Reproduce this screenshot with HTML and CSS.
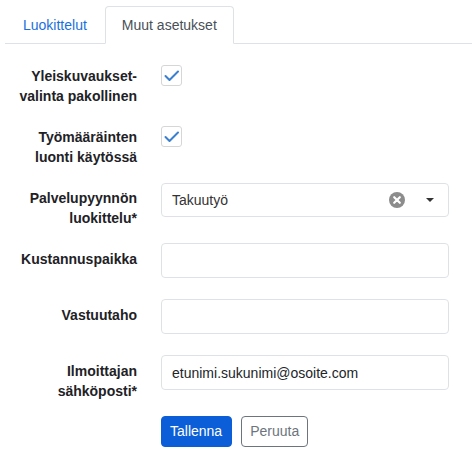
FILE: index.html
```html
<!DOCTYPE html>
<html lang="fi">
  <head>
    <meta charset="UTF-8" />
    <meta name="viewport" content="width=device-width, initial-scale=1.0" />
    <title>Muut asetukset</title>
    <link rel="stylesheet" href="styles.css">
  </head>
  <body>
    <div class="page">
      <ul class="tabs">
        <li><a href="#" class="tab">Luokittelut</a></li>
        <li><a href="#" class="tab active">Muut asetukset</a></li>
      </ul>

      <form class="settings">
        <div class="field">
          <label class="field-label">Yleiskuvaukset-<br />valinta pakollinen</label>
          <div class="field-control">
            <span class="check">
              <svg width="21" height="21" viewBox="0 0 21 21">
                <path d="M4.5 11 L8.5 15 L17 6.5" fill="none" stroke="#3a80cf" stroke-width="2" stroke-linecap="round" stroke-linejoin="round" />
              </svg>
            </span>
          </div>
        </div>

        <div class="field">
          <label class="field-label">Työmääräinten<br />luonti käytössä</label>
          <div class="field-control">
            <span class="check">
              <svg width="21" height="21" viewBox="0 0 21 21">
                <path d="M4.5 11 L8.5 15 L17 6.5" fill="none" stroke="#3a80cf" stroke-width="2" stroke-linecap="round" stroke-linejoin="round" />
              </svg>
            </span>
          </div>
        </div>

        <div class="field">
          <label class="field-label">Palvelupyynnön<br />luokittelu*</label>
          <div class="field-control">
            <div class="select">
              <span class="select-value">Takuutyö</span>
              <span class="select-clear">
                <svg width="16" height="16" viewBox="0 0 16 16">
                  <circle cx="8" cy="8" r="8" fill="#8c8c8c" />
                  <path d="M5.2 5.2 L10.8 10.8 M10.8 5.2 L5.2 10.8" stroke="#fff" stroke-width="2.2" stroke-linecap="round" />
                </svg>
              </span>
              <span class="select-caret"></span>
            </div>
          </div>
        </div>

        <div class="field">
          <label class="field-label">Kustannuspaikka</label>
          <div class="field-control">
            <input type="text" class="input" />
          </div>
        </div>

        <div class="field">
          <label class="field-label">Vastuutaho</label>
          <div class="field-control">
            <input type="text" class="input" />
          </div>
        </div>

        <div class="field">
          <label class="field-label">Ilmoittajan<br />sähköposti*</label>
          <div class="field-control">
            <input type="text" class="input" value="etunimi.sukunimi@osoite.com" />
          </div>
        </div>

        <div class="field">
          <div class="field-label"></div>
          <div class="field-control buttons">
            <button type="submit" class="btn btn-primary">Tallenna</button>
            <button type="button" class="btn btn-outline">Peruuta</button>
          </div>
        </div>
      </form>
    </div>
  </body>
</html>
```

FILE: styles.css
```css
:root {
  --primary-color: #0b5ed7;
  --link-color: #1a6fdc;
  --text-color: #212529;
  --border-color: #dee2e6;
  --muted-color: #6c757d;
}

* {
  box-sizing: border-box;
  margin: 0;
  padding: 0;
}

body {
  font-family: "Liberation Sans", Arial, sans-serif;
  font-size: 14px;
  line-height: 20px;
  color: var(--text-color);
  background-color: #fff;
}

.page {
  padding: 6px 0 0 5px;
}

.tabs {
  list-style: none;
  display: flex;
  border-bottom: 1px solid var(--border-color);
}

.tab {
  display: block;
  padding: 8px 17px 7px;
  line-height: 21px;
  border: 1px solid transparent;
  border-radius: 4px 4px 0 0;
  margin-bottom: -1px;
  color: var(--link-color);
  text-decoration: none;
}

.tab.active {
  padding: 8px 16px 7px;
  color: #495057;
  background-color: #fff;
  border-color: var(--border-color) var(--border-color) #fff;
}

.settings {
  margin-top: 16px;
  padding-right: 23px;
}

.field {
  display: flex;
  gap: 24px;
  min-height: 41px;
  margin-bottom: 15px;
}

.field-label {
  width: 132px;
  flex-shrink: 0;
  padding-top: 6px;
  text-align: right;
  font-weight: bold;
  color: #1e2226;
}

.field-control {
  flex: 1;
}

.check {
  display: block;
  width: 21px;
  height: 21px;
  margin-top: 5px;
  border: 1px solid #d6d6d6;
  border-radius: 3px;
  background-color: #fff;
}

.check svg {
  display: block;
  margin: -1px 0 0 -1px;
}

.select {
  display: flex;
  align-items: center;
  height: 34px;
  margin-top: 1px;
  padding: 0 14px 0 10px;
  border: 1px solid var(--border-color);
  border-radius: 4px;
  color: #333;
}

.select-value {
  flex: 1;
}

.select-clear {
  display: flex;
  margin-right: 21px;
}

.select-caret {
  width: 0;
  height: 0;
  border-left: 4px solid transparent;
  border-right: 4px solid transparent;
  border-top: 4px solid #333;
}

.input {
  display: block;
  width: 100%;
  height: 35px;
  padding: 0 10px;
  border: 1px solid var(--border-color);
  border-radius: 4px;
  font-family: inherit;
  font-size: 14px;
  color: var(--text-color);
}

.buttons {
  display: flex;
  align-items: flex-start;
  gap: 9px;
}

.btn {
  font-family: inherit;
  font-size: 14px;
  line-height: 21px;
  padding: 4px 9px 4px 8px;
  border: 1px solid var(--primary-color);
  border-radius: 4px;
  cursor: pointer;
}

.btn-primary {
  background-color: var(--primary-color);
  color: white;
}

.btn-outline {
  padding: 4px 8px;
  background-color: #fff;
  border-color: var(--muted-color);
  color: var(--muted-color);
}
```
